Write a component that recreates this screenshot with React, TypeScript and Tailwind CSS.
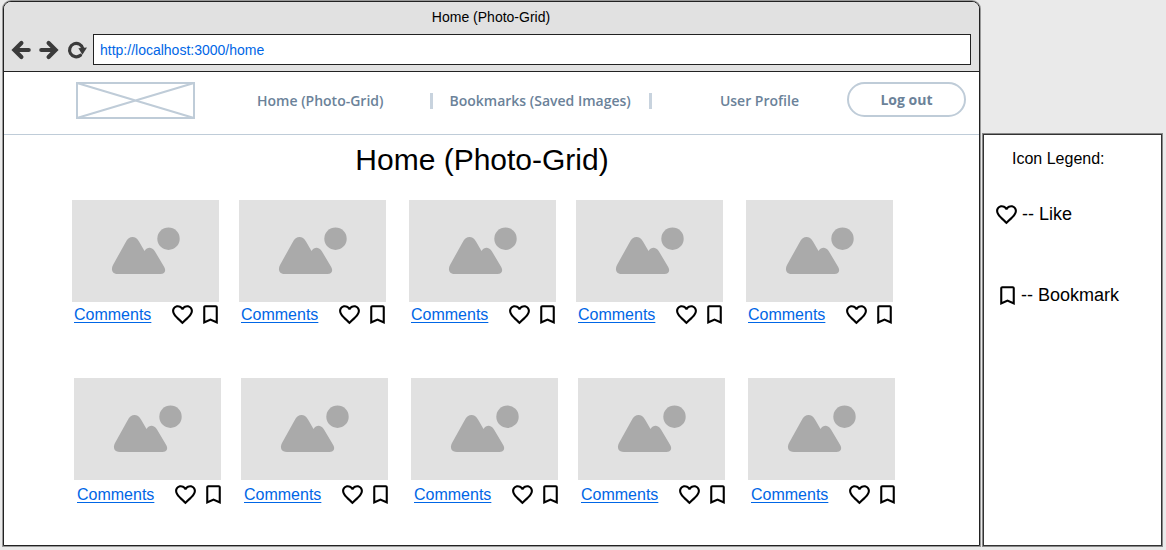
import { MdBookmarkBorder, MdFavoriteBorder } from "react-icons/md";

function ArrowIcon({ flipped = false }: { flipped?: boolean }) {
  return (
    <svg
      viewBox="0 0 20 20"
      className={flipped ? "size-5 rotate-180" : "size-5"}
      fill="none"
      stroke="#3b3b3b"
      strokeWidth="4.2"
      strokeLinecap="round"
      strokeLinejoin="miter"
      aria-hidden="true"
    >
      <path d="M10.400 3 3.400 10l7 7M4.500 10h13.200" />
    </svg>
  );
}

function ReloadIcon() {
  return (
    <svg viewBox="0 0 20 20" className="size-5" fill="none" aria-hidden="true">
      <path
        d="M13.500 15.300A6.700 6.700 0 1 1 15.800 8.600"
        stroke="#3b3b3b"
        strokeWidth="3.2"
        strokeLinecap="round"
      />
      <path d="M11.400 8.200 20 7.400 15.400 14.800Z" fill="#3b3b3b" />
    </svg>
  );
}

function Placeholder() {
  return (
    <svg
      viewBox="0 0 147 102"
      className="block h-[102px] w-full bg-[#e1e1e1]"
      fill="#aaaaaa"
      role="img"
      aria-label="Photo"
    >
      <circle cx="96.500" cy="38.700" r="11.200" />
      <path d="M46 74C40.500 74 38.500 70 41 65L53.500 42.500C57 35.500 63.500 35.500 67 41.500L72.500 51C75.500 46.700 80 46.800 83 51.500L92.200 67C94.500 71 92.500 74 88.500 74Z" />
    </svg>
  );
}

function PhotoCard({ captionClass }: { captionClass: string }) {
  return (
    <article className="w-[147px]">
      <Placeholder />
      <div className={`flex items-center gap-[19px] ${captionClass}`}>
        <a href="#comments" className="text-base leading-6 text-[#0066e6] underline underline-offset-2">
          Comments
        </a>
        <div className="flex shrink-0 gap-[3px]">
          <button type="button" aria-label="Like">
            <MdFavoriteBorder className="size-[25px]" />
          </button>
          <button type="button" aria-label="Bookmark">
            <MdBookmarkBorder className="size-[25px]" />
          </button>
        </div>
      </div>
    </article>
  );
}

const groups = [2, 2, 1];

function PhotoRow({ captionClass }: { captionClass: string }) {
  return (
    <div className="flex gap-[23px]">
      {groups.map((count, i) => (
        <div key={i} className="flex gap-5">
          {Array.from({ length: count }, (_, j) => (
            <PhotoCard key={j} captionClass={captionClass} />
          ))}
        </div>
      ))}
    </div>
  );
}

function BrowserBar() {
  return (
    <header className="border-b border-[#222] bg-[#e1e1e1] pr-2 pb-1.5 pl-[7px]">
      <p className="pt-1 text-center text-sm leading-[22px]">Home (Photo-Grid)</p>
      <div className="mt-1.5 flex items-center">
        <button type="button" aria-label="Back">
          <ArrowIcon />
        </button>
        <button type="button" aria-label="Forward" className="ml-2">
          <ArrowIcon flipped />
        </button>
        <button type="button" aria-label="Reload" className="ml-2">
          <ReloadIcon />
        </button>
        <input
          aria-label="Address"
          defaultValue="http://localhost:3000/home"
          className="ml-1.5 h-[31px] min-w-0 flex-1 border border-[#222] bg-white px-1.5 text-sm text-[#0066e6] outline-none"
        />
      </div>
    </header>
  );
}

function SiteNav() {
  return (
    <nav className="flex h-[63px] items-start border-b border-[#bfccd8] pt-2.5 pr-[13px] pl-[72px] font-['Open_Sans',sans-serif] text-sm font-semibold text-[#6b8299]">
      <svg viewBox="0 0 119 37" className="h-[37px] w-[119px]" fill="none" stroke="#bfccd8" strokeWidth="2" role="img" aria-label="Logo">
        <path d="M1 1h117v35H1ZM1 1l117 35M118 1 1 36" />
      </svg>
      <div className="flex h-[37px] flex-1 items-center">
        <a href="#home" className="ml-[62px] whitespace-nowrap">Home (Photo-Grid)</a>
        <span className="ml-[47px] h-4 w-[3px] bg-[#c8d3de]" />
        <a href="#bookmarks" className="ml-4 whitespace-nowrap">Bookmarks (Saved Images)</a>
        <span className="ml-[18px] h-4 w-[3px] bg-[#c8d3de]" />
        <a href="#profile" className="mr-12 ml-auto whitespace-nowrap">User Profile</a>
      </div>
      <button type="button" className="h-[35px] w-[119px] rounded-full border-2 border-[#bfccd8] font-bold">
        Log out
      </button>
    </nav>
  );
}

export default function App() {
  return (
    <div className="flex min-h-screen bg-[#eaeaea] pt-px pr-1 pb-1 pl-[3px] font-['Liberation_Sans',Arial,sans-serif] text-black">
      <main className="min-w-0 flex-1 overflow-hidden rounded-t-lg border border-[#222] bg-white shadow-[0_0_0_1px_#999]">
        <BrowserBar />
        <SiteNav />
        <h1 className="pt-[7px] pr-[19px] text-center text-3xl leading-9">Home (Photo-Grid)</h1>
        <section className="pt-[22px] pl-[68px]">
          <PhotoRow captionClass="pl-0.5" />
        </section>
        <section className="pt-[51px] pl-[70px]">
          <PhotoRow captionClass="pt-0.5 pl-[3px]" />
        </section>
      </main>
      <aside className="mt-[133px] ml-[3px] w-[179px] border border-[#333] bg-white shadow-[0_0_0_1px_#888]">
        <h2 className="pt-3 pl-[28px] text-base leading-6">Icon Legend:</h2>
        <p className="mt-[29px] flex items-center gap-[3px] pl-[10px] text-lg leading-7">
          <MdFavoriteBorder className="size-[25px]" />
          -- Like
        </p>
        <p className="mt-[53px] flex items-center gap-px pl-[11px] text-lg leading-7">
          <MdBookmarkBorder className="size-[25px]" />
          -- Bookmark
        </p>
      </aside>
    </div>
  );
}
